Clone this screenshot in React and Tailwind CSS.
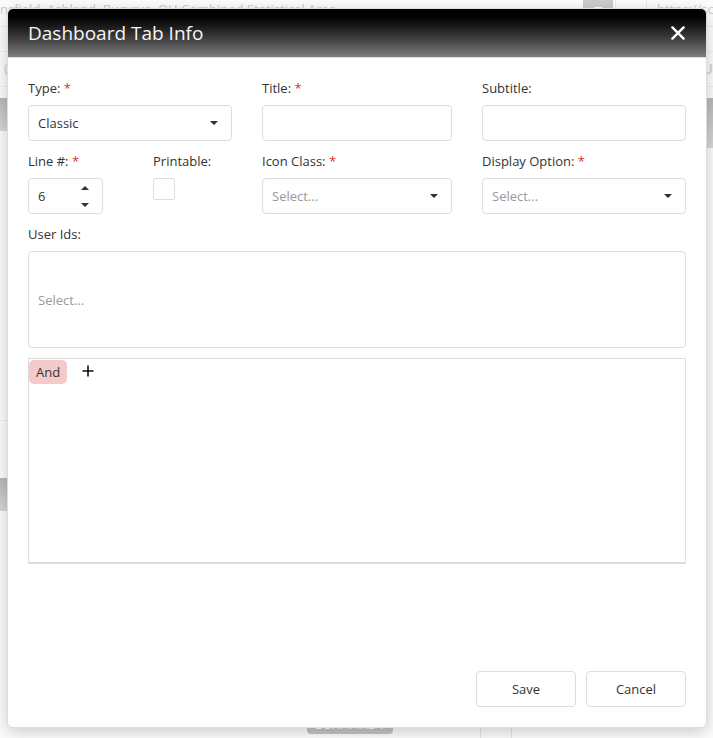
import React from "react";

const box =
  "w-full rounded border border-[#ddd] bg-white px-[9px] text-[13px] text-[#333] outline-none placeholder:text-[#999] focus:border-[#888]";

function Field({ id, label, required, children }) {
  return (
    <div className="flex min-w-0 flex-col gap-[7px]">
      <label htmlFor={id} className="whitespace-nowrap text-[13px] leading-5">
        {label}
        {required && <span className="text-[#d9312d]"> *</span>}
      </label>
      {children}
    </div>
  );
}

function Caret({ up = false }) {
  return (
    <svg width="8" height="4" viewBox="0 0 8 4" aria-hidden="true" fill="#333">
      <path d={up ? "M0 4L3.4 0.4Q4 0 4.6 0.4L8 4Z" : "M0 0L3.4 3.6Q4 4 4.6 3.6L8 0Z"} />
    </svg>
  );
}

function Dropdown({ id, options, placeholder }) {
  return (
    <div className="relative">
      <select
        id={id}
        defaultValue={placeholder ? "" : options[0]}
        className={`${box} block h-9 appearance-none pt-0.5 ${placeholder ? "text-[#999]!" : ""}`}
      >
        {placeholder && <option value="">{placeholder}</option>}
        {options.map((o) => (
          <option key={o}>{o}</option>
        ))}
      </select>
      <span className="pointer-events-none absolute inset-y-0 right-3.5 flex items-center">
        <Caret />
      </span>
    </div>
  );
}

function PageBehind() {
  return (
    <div aria-hidden="true" className="absolute inset-0 flex flex-col overflow-hidden bg-[#fcfcfc] text-[13px] text-[#ccc]">
      <div className="flex h-[27px] shrink-0 border-b border-[#eee]">
        <div className="flex-1 overflow-hidden whitespace-nowrap leading-[18px]">
          nsfield, Ashland, Bucyrus, OH Combined Statistical Area
        </div>
        <div className="flex h-5 w-[30px] justify-center bg-[#ccc] pt-[7px]">
          <span className="h-px w-2 bg-white" />
        </div>
        <div className="ml-0.5 w-8 border-x border-[#eee]" />
        <div className="w-[66px] overflow-hidden whitespace-nowrap pl-[10px] leading-[18px]">https://sc</div>
      </div>
      <div className="h-[25px] shrink-0 border-b border-[#eee]" />
      <div className="flex h-[35px] shrink-0 items-center justify-between border-b border-[#eee]">
        <span className="pl-1">(</span>
        <span className="text-sm leading-5 font-bold text-[#ddd6d6]">GU</span>
      </div>
      <div className="flex flex-1 justify-between pt-[11px]">
        <div className="flex w-2 flex-col">
          <div className="h-[33px] bg-linear-to-b from-[#b8b8b8] to-[#d8d8d8]" />
          <div className="h-[290px] border-b border-[#eee]" />
          <div className="mt-[57px] h-[33px] bg-linear-to-b from-[#b8b8b8] to-[#d8d8d8]" />
        </div>
        <div className="w-2">
          <div className="h-[50px] bg-linear-to-b from-[#b8b8b8] to-[#d8d8d8]" />
        </div>
      </div>
      <div className="flex h-5 shrink-0 justify-end">
        <div className="flex h-4 w-[86px] items-end justify-center rounded-sm bg-[#c4c4c4] text-sm leading-5 text-white">
          ECKHARDT
        </div>
        <div className="ml-[87px] w-8 border-x border-[#e5e5e5]" />
        <div className="w-[201px]" />
      </div>
    </div>
  );
}

export default function App() {
  return (
    <div className="relative min-h-screen font-['Open_Sans','Noto_Sans',sans-serif] text-[#333]">
      <PageBehind />
      <div className="relative flex min-h-screen flex-col pt-2 pr-1.5 pb-2.5 pl-[7px]">
        <div
          role="dialog"
          aria-labelledby="dialog-title"
          className="flex flex-1 flex-col overflow-hidden rounded-md border border-[#ddd] bg-white shadow-[0_4px_16px_rgba(0,0,0,0.2)]"
        >
          <header className="flex h-[49px] items-center justify-between border-b border-[#ddd] bg-linear-to-b from-black to-[#808080] pr-5 pl-5 text-[#f5f5f5]">
            <h1 id="dialog-title" className="text-[19px] leading-6">
              Dashboard Tab Info
            </h1>
            <button type="button" aria-label="Close" className="-mr-0.5 flex size-5 items-center justify-center">
              <svg width="14" height="14" viewBox="0 0 14 14" fill="none" stroke="#fff" strokeWidth="2.4" strokeLinecap="round">
                <path d="M1.4 1.4L12.6 12.6M12.6 1.4L1.4 12.6" />
              </svg>
            </button>
          </header>

          <form className="flex flex-1 flex-col p-5" onSubmit={(e) => e.preventDefault()}>
            <div className="grid grid-cols-[204fr_190fr_204fr] gap-x-[30px] gap-y-2.5">
              <Field id="type" label="Type:" required>
                <Dropdown id="type" options={["Classic"]} />
              </Field>
              <Field id="title" label="Title:" required>
                <input id="title" type="text" className={`${box} h-9`} />
              </Field>
              <Field id="subtitle" label="Subtitle:">
                <input id="subtitle" type="text" className={`${box} h-9`} />
              </Field>

              <div className="flex gap-[50px]">
                <div className="w-[75px]">
                  <Field id="line" label="Line #:" required>
                    <div className="flex h-9 rounded border border-[#ddd]">
                      <input
                        id="line"
                        type="number"
                        defaultValue="6"
                        className="w-full min-w-0 appearance-none bg-transparent pt-0.5 pl-[9px] text-[13px] outline-none [-moz-appearance:textfield] [&::-webkit-inner-spin-button]:appearance-none"
                      />
                      <div className="flex w-[34px] shrink-0 flex-col">
                        <button type="button" aria-label="Increase" className="flex flex-1 items-center justify-center">
                          <Caret up />
                        </button>
                        <button type="button" aria-label="Decrease" className="flex flex-1 items-center justify-center">
                          <Caret />
                        </button>
                      </div>
                    </div>
                  </Field>
                </div>
                <Field id="printable" label="Printable:">
                  <input
                    id="printable"
                    type="checkbox"
                    className="size-[22px] appearance-none rounded-xs border border-[#ddd] bg-white checked:bg-[#333]"
                  />
                </Field>
              </div>
              <Field id="icon-class" label="Icon Class:" required>
                <Dropdown id="icon-class" options={[]} placeholder="Select..." />
              </Field>
              <Field id="display-option" label="Display Option:" required>
                <Dropdown id="display-option" options={[]} placeholder="Select..." />
              </Field>

              <div className="col-span-3">
                <Field id="user-ids" label="User Ids:">
                  <input id="user-ids" type="text" placeholder="Select..." className={`${box} h-[97px]`} />
                </Field>
              </div>
            </div>

            <div className="mt-2.5 flex h-[206px] items-start border border-b-2 border-[#ddd] pt-px">
              <button type="button" className="h-6 rounded-[5px] bg-[#f4caca] px-[7px] text-[13px] leading-6">
                And
              </button>
              <button type="button" aria-label="Add" className="ml-2.5 flex h-[22px] w-[22px] items-center justify-center">
                <svg width="12" height="12" viewBox="0 0 12 12" stroke="#111" strokeWidth="1.6">
                  <path d="M6 0.5V11.5M0.5 6H11.5" />
                </svg>
              </button>
            </div>

            <div className="mt-auto flex justify-end gap-2.5">
              <button type="submit" className="h-9 w-[100px] rounded border border-[#ddd] bg-white pt-0.5 text-[13px]">
                Save
              </button>
              <button type="button" className="h-9 w-[100px] rounded border border-[#ddd] bg-white pt-0.5 text-[13px]">
                Cancel
              </button>
            </div>
          </form>
        </div>
      </div>
    </div>
  );
}
